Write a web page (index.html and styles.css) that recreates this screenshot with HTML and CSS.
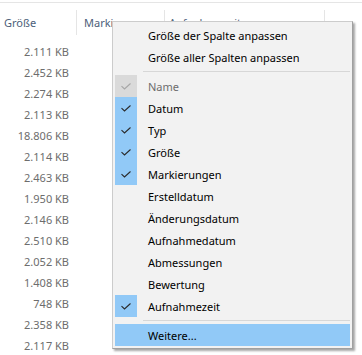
FILE: index.html
```html
<!DOCTYPE html>
<html lang="de">
<head>
<meta charset="utf-8">
<link rel="stylesheet" href="styles.css">
</head>
<body>
<div class="view">
  <div class="header">
    <div class="col col-size">Größe</div>
    <div class="col col-tags">Markierungen</div>
    <div class="col col-time">Aufnahmezeit</div>
    <div class="col col-rest"></div>
  </div>
  <div class="rows">
    <div class="row">2.111 KB</div>
    <div class="row">2.452 KB</div>
    <div class="row">2.274 KB</div>
    <div class="row">2.113 KB</div>
    <div class="row">18.806 KB</div>
    <div class="row">2.114 KB</div>
    <div class="row">2.463 KB</div>
    <div class="row">1.950 KB</div>
    <div class="row">2.146 KB</div>
    <div class="row">2.510 KB</div>
    <div class="row">2.052 KB</div>
    <div class="row">1.408 KB</div>
    <div class="row">748 KB</div>
    <div class="row">2.358 KB</div>
    <div class="row">2.117 KB</div>
  </div>
</div>

<div class="menu">
  <div class="item"><span class="check"></span><span class="label">Größe der Spalte anpassen</span></div>
  <div class="item"><span class="check"></span><span class="label">Größe aller Spalten anpassen</span></div>
  <div class="sep"></div>
  <div class="item disabled"><span class="check on"><svg width="10" height="7" viewBox="0 0 10 7"><polyline points="0.5,3.2 3.5,6 9.5,0.5" fill="none" stroke="#a6a6a6" stroke-width="1.1"/></svg></span><span class="label">Name</span></div>
  <div class="item"><span class="check on"><svg width="10" height="7" viewBox="0 0 10 7"><polyline points="0.5,3.2 3.5,6 9.5,0.5" fill="none" stroke="#2a2a2a" stroke-width="1.1"/></svg></span><span class="label">Datum</span></div>
  <div class="item"><span class="check on"><svg width="10" height="7" viewBox="0 0 10 7"><polyline points="0.5,3.2 3.5,6 9.5,0.5" fill="none" stroke="#2a2a2a" stroke-width="1.1"/></svg></span><span class="label">Typ</span></div>
  <div class="item"><span class="check on"><svg width="10" height="7" viewBox="0 0 10 7"><polyline points="0.5,3.2 3.5,6 9.5,0.5" fill="none" stroke="#2a2a2a" stroke-width="1.1"/></svg></span><span class="label">Größe</span></div>
  <div class="item"><span class="check on"><svg width="10" height="7" viewBox="0 0 10 7"><polyline points="0.5,3.2 3.5,6 9.5,0.5" fill="none" stroke="#2a2a2a" stroke-width="1.1"/></svg></span><span class="label">Markierungen</span></div>
  <div class="item"><span class="check"></span><span class="label">Erstelldatum</span></div>
  <div class="item"><span class="check"></span><span class="label">Änderungsdatum</span></div>
  <div class="item"><span class="check"></span><span class="label">Aufnahmedatum</span></div>
  <div class="item"><span class="check"></span><span class="label">Abmessungen</span></div>
  <div class="item"><span class="check"></span><span class="label">Bewertung</span></div>
  <div class="item"><span class="check on"><svg width="10" height="7" viewBox="0 0 10 7"><polyline points="0.5,3.2 3.5,6 9.5,0.5" fill="none" stroke="#2a2a2a" stroke-width="1.1"/></svg></span><span class="label">Aufnahmezeit</span></div>
  <div class="sep"></div>
  <div class="item hover"><span class="check"></span><span class="label">Weitere...</span></div>
</div>
</body>
</html>
```

FILE: styles.css
```css
html, body {
  margin: 0;
  padding: 0;
  background: #ffffff;
  font-family: "Noto Sans", "Open Sans", sans-serif;
  font-size: 11px;
  overflow: hidden;
}

.view {
  margin-top: 2px;
  border-top: 1px solid #e5e5e5;
}

.header {
  display: flex;
  height: 38px;
  align-items: flex-start;
  padding-top: 7px;
  box-sizing: border-box;
}

.col {
  flex: none;
  height: 25px;
  line-height: 26px;
  color: #4c607a;
  box-sizing: border-box;
  white-space: nowrap;
  overflow: hidden;
}

.col-size {
  width: 77px;
  padding-left: 4px;
  border-right: 1px solid #e5e5e5;
}

.col-tags {
  width: 88px;
  padding-left: 7px;
  border-right: 1px solid #e5e5e5;
}

.col-time {
  width: 160px;
  padding-left: 4px;
  border-right: 1px solid #e5e5e5;
}

.col-rest {
  flex: 1;
}

.rows {
  display: flex;
  flex-direction: column;
}

.row {
  width: 69px;
  height: 21px;
  line-height: 21px;
  text-align: right;
  color: #6d6d6d;
}

.menu {
  position: absolute;
  left: 112px;
  top: 21px;
  width: 241px;
  box-sizing: border-box;
  background: #f2f2f2;
  border: 1px solid #cccccc;
  border-right-color: #a0a0a0;
  border-bottom-color: #a0a0a0;
  box-shadow: 2px 2px 2px rgba(0, 0, 0, 0.35);
  padding: 2px;
  display: flex;
  flex-direction: column;
}

.item {
  display: flex;
  align-items: center;
  height: 22px;
  color: #000000;
}

.check {
  width: 22px;
  height: 22px;
  flex: none;
  display: flex;
  align-items: center;
  justify-content: center;
}

.check.on {
  background: #91c9f7;
}

.disabled .check.on {
  background: #dadada;
}

.disabled .label {
  color: #6d6d6d;
}

.label {
  margin-left: 11px;
  white-space: nowrap;
}

.hover {
  background: #91c9f7;
}

.sep {
  height: 1px;
  background: #d7d7d7;
  margin: 3px 0 3px 28px;
}
```
